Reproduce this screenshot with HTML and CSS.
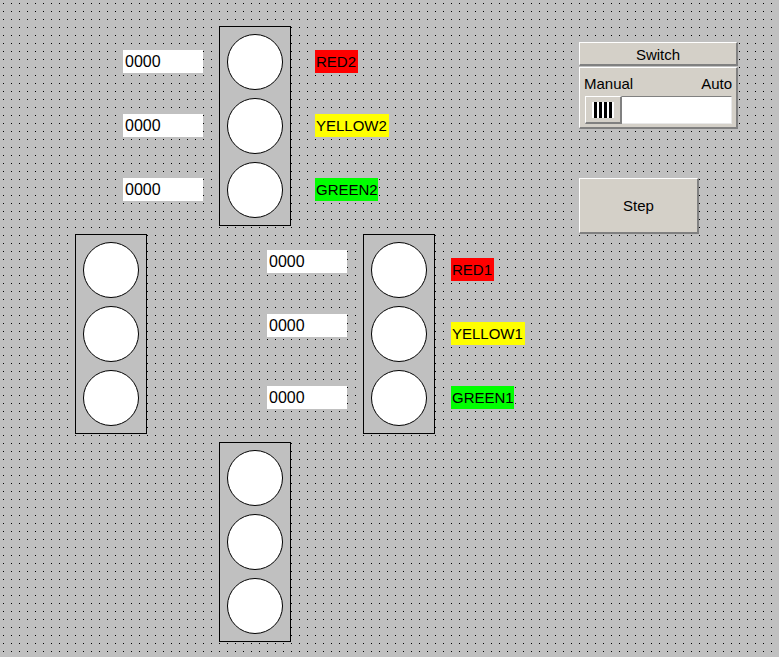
FILE: index.html
```html
<!DOCTYPE html>
<html>
<head>
<meta charset="utf-8">
<link rel="stylesheet" href="styles.css">
</head>
<body>
<div class="canvas">
  <svg class="grid" width="779" height="657" aria-hidden="true">
    <defs>
      <pattern id="dots" width="8" height="8" patternUnits="userSpaceOnUse">
        <rect x="3" y="3" width="1" height="1" fill="#000"/>
      </pattern>
    </defs>
    <rect width="779" height="657" fill="url(#dots)" shape-rendering="crispEdges"/>
  </svg>

  <div class="light light-top"><span class="lamp"></span><span class="lamp"></span><span class="lamp"></span></div>
  <div class="light light-left"><span class="lamp"></span><span class="lamp"></span><span class="lamp"></span></div>
  <div class="light light-right"><span class="lamp"></span><span class="lamp"></span><span class="lamp"></span></div>
  <div class="light light-bottom"><span class="lamp"></span><span class="lamp"></span><span class="lamp"></span></div>

  <div class="val v1">0000</div>
  <div class="val v2">0000</div>
  <div class="val v3">0000</div>
  <div class="val v4">0000</div>
  <div class="val v5">0000</div>
  <div class="val v6">0000</div>

  <div class="tag red t-red2">RED2</div>
  <div class="tag yellow t-yel2">YELLOW2</div>
  <div class="tag green t-grn2">GREEN2</div>
  <div class="tag red t-red1">RED1</div>
  <div class="tag yellow t-yel1">YELLOW1</div>
  <div class="tag green t-grn1">GREEN1</div>

  <div class="switch">
    <div class="switch-head">Switch</div>
    <div class="switch-body">
      <div class="switch-labels"><span>Manual</span><span>Auto</span></div>
      <div class="track">
        <div class="knob"><div class="grip"><i></i><i></i><i></i><i></i></div></div>
      </div>
    </div>
  </div>

  <div class="btn step">Step</div>
</div>
</body>
</html>
```

FILE: styles.css
```css
html, body {
  margin: 0;
  padding: 0;
  background: #c0c0c0;
}
.canvas {
  position: relative;
  width: 779px;
  height: 657px;
  overflow: hidden;
  background: #c0c0c0;
  font-family: "Liberation Sans", Arial, sans-serif;
  color: #000;
}
.grid {
  position: absolute;
  left: 0;
  top: 0;
}

/* traffic lights */
.light {
  position: absolute;
  box-sizing: border-box;
  width: 72px;
  height: 200px;
  border: 1px solid #000;
  background: #c0c0c0;
  padding-top: 7px;
  display: flex;
  flex-direction: column;
  align-items: center;
  gap: 8px;
}
.lamp {
  display: block;
  box-sizing: border-box;
  width: 56px;
  height: 56px;
  border: 1px solid #000;
  border-radius: 50%;
  background: #fff;
}
.light-top { left: 219px; top: 26px; }
.light-left { left: 75px; top: 234px; }
.light-right { left: 363px; top: 234px; }
.light-bottom { left: 219px; top: 442px; }

/* numeric fields */
.val {
  position: absolute;
  width: 80px;
  height: 23px;
  box-sizing: border-box;
  padding-left: 2px;
  background: #fff;
  font-size: 16px;
  line-height: 23px;
}
.v1 { left: 123px; top: 50px; }
.v2 { left: 123px; top: 114px; }
.v3 { left: 123px; top: 178px; }
.v4 { left: 267px; top: 250px; }
.v5 { left: 267px; top: 314px; }
.v6 { left: 267px; top: 386px; }

/* colour tags */
.tag {
  position: absolute;
  height: 23px;
  box-sizing: border-box;
  padding-left: 1px;
  font-size: 15px;
  line-height: 23px;
  white-space: nowrap;
  overflow: hidden;
}
.red { background: #ff0000; width: 43px; }
.yellow { background: #ffff00; width: 74px; }
.green { background: #00ff00; width: 63px; }
.t-red2 { left: 315px; top: 50px; }
.t-yel2 { left: 315px; top: 114px; }
.t-grn2 { left: 315px; top: 178px; }
.t-red1 { left: 451px; top: 258px; }
.t-yel1 { left: 451px; top: 322px; }
.t-grn1 { left: 451px; top: 386px; }

/* switch */
.switch {
  position: absolute;
  left: 579px;
  top: 42px;
  width: 159px;
  display: flex;
  flex-direction: column;
  gap: 1px;
}
.switch-head,
.switch-body,
.btn {
  box-sizing: border-box;
  background: #d4d0c8;
  border-top: 1px solid #fff;
  border-left: 1px solid #fff;
  border-right: 2px solid #808080;
  border-bottom: 2px solid #808080;
}
.switch-head {
  height: 24px;
  font-size: 15px;
  line-height: 23px;
  text-align: center;
}
.switch-body {
  height: 62px;
  padding: 5px 4px 0 4px;
  display: flex;
  flex-direction: column;
  gap: 2px;
}
.switch-labels {
  display: flex;
  justify-content: space-between;
  font-size: 15px;
  line-height: 21px;
}
.track {
  box-sizing: border-box;
  height: 28px;
  margin-left: 1px;
  background: #fff;
  border-top: 1px solid #808080;
  border-left: 1px solid #808080;
  border-right: 1px solid #e8e8e8;
  border-bottom: 1px solid #e8e8e8;
  display: flex;
}
.knob {
  box-sizing: border-box;
  width: 37px;
  height: 28px;
  margin: -1px 0 0 -1px;
  background: #d4d0c8;
  border-top: 1px solid #fff;
  border-left: 1px solid #fff;
  border-right: 2px solid #808080;
  border-bottom: 2px solid #808080;
  display: flex;
  justify-content: center;
  align-items: center;
}
.grip {
  display: flex;
  gap: 2px;
  padding: 0 2px;
  background: #fff;
}
.grip i {
  display: block;
  width: 3px;
  height: 16px;
  background: #000;
}

/* step button */
.step {
  position: absolute;
  left: 579px;
  top: 178px;
  width: 120px;
  height: 56px;
  font-size: 15px;
  display: flex;
  align-items: center;
  justify-content: center;
}
```
